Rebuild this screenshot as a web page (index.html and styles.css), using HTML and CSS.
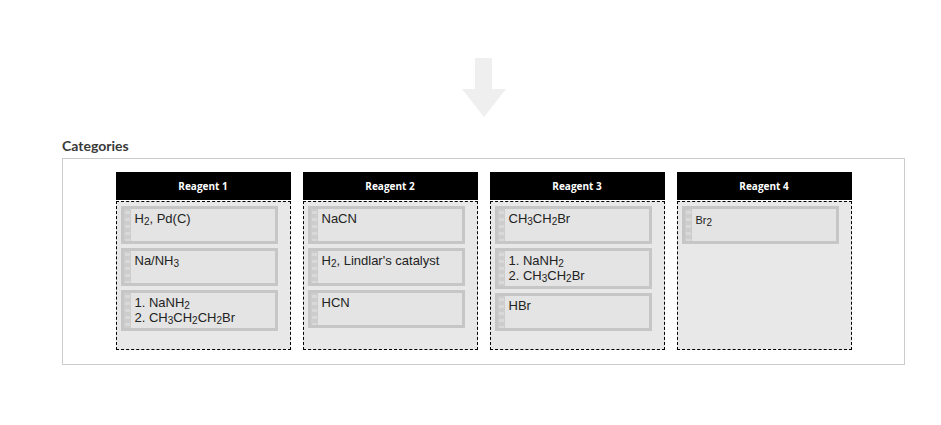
FILE: index.html
```html
<!DOCTYPE html>
<html>
<head>
<meta charset="utf-8">
<link rel="stylesheet" href="styles.css">
</head>
<body>
<div class="page">
  <div class="arrow-wrap">
    <svg class="arrow" width="46" height="60" viewBox="0 0 46 60">
      <polygon points="14,0 31,0 31,31 45,31 23,59 1,31 14,31" fill="#efefef"/>
    </svg>
  </div>
  <h2 class="title">Categories</h2>
  <div class="categories">
    <div class="cols">
      <div class="col">
        <div class="col-head">Reagent 1</div>
        <div class="drop">
          <div class="card"><span class="handle"></span><div class="txt">H<sub>2</sub>, Pd(C)</div></div>
          <div class="card"><span class="handle"></span><div class="txt">Na/NH<sub>3</sub></div></div>
          <div class="card"><span class="handle"></span><div class="txt">1. NaNH<sub>2</sub><br>2. CH<sub>3</sub>CH<sub>2</sub>CH<sub>2</sub>Br</div></div>
        </div>
      </div>
      <div class="col">
        <div class="col-head">Reagent 2</div>
        <div class="drop">
          <div class="card"><span class="handle"></span><div class="txt">NaCN</div></div>
          <div class="card"><span class="handle"></span><div class="txt">H<sub>2</sub>, Lindlar's catalyst</div></div>
          <div class="card"><span class="handle"></span><div class="txt">HCN</div></div>
        </div>
      </div>
      <div class="col">
        <div class="col-head">Reagent 3</div>
        <div class="drop">
          <div class="card"><span class="handle"></span><div class="txt">CH<sub>3</sub>CH<sub>2</sub>Br</div></div>
          <div class="card"><span class="handle"></span><div class="txt">1. NaNH<sub>2</sub><br>2. CH<sub>3</sub>CH<sub>2</sub>Br</div></div>
          <div class="card"><span class="handle"></span><div class="txt">HBr</div></div>
        </div>
      </div>
      <div class="col">
        <div class="col-head">Reagent 4</div>
        <div class="drop">
          <div class="card"><span class="handle"></span><div class="txt small">Br<sub>2</sub></div></div>
        </div>
      </div>
    </div>
  </div>
</div>
</body>
</html>
```
FILE: styles.css
```css
* { box-sizing: border-box; }
html, body { margin: 0; padding: 0; background: #fff; }
.page {
  width: 941px;
  height: 425px;
  padding: 58px 36px 0 62px;
}
.arrow-wrap {
  display: flex;
  justify-content: center;
  width: 843px;
  height: 60px;
}
.arrow { display: block; }
.title {
  margin: 20px 0 0 0;
  font-family: Lato, "Liberation Sans", sans-serif;
  font-weight: 700;
  font-size: 14px;
  line-height: 16px;
  color: #3a3a3a;
  height: 20px;
}
.categories {
  width: 843px;
  height: 207px;
  border: 1px solid #cccccc;
  padding-top: 13px;
  display: flex;
  justify-content: center;
}
.cols {
  display: flex;
  gap: 12px;
}
.col {
  width: 175px;
}
.col-head {
  height: 28px;
  background: #000;
  color: #fff;
  font-family: "Open Sans", "DejaVu Sans", sans-serif;
  font-weight: 700;
  font-size: 10px;
  display: flex;
  align-items: center;
  justify-content: center;
  margin-bottom: 1px;
}
.drop {
  height: 149px;
  border: 1px dashed #000;
  background: #e8e8e8;
  padding: 4px 0 0 4px;
  display: flex;
  flex-direction: column;
  gap: 4px;
}
.card {
  width: 157px;
  border: 3px solid #c6c6c6;
  background: #e4e4e4;
  display: flex;
  min-height: 38px;
}
.handle {
  width: 7px;
  flex: none;
  background-color: #cdcdcd;
  background-image: repeating-linear-gradient(to bottom, transparent 0, transparent 2px, #d9d9d9 2px, #d9d9d9 5px, transparent 5px, transparent 7px);
  background-size: 5px 100%;
  background-repeat: no-repeat;
  background-position: 1px 0;
}
.txt {
  padding: 2px 4px 3px 4px;
  font-family: "Liberation Sans", Arial, sans-serif;
  font-size: 13px;
  line-height: 15px;
  color: #222;
}
.txt.small { font-size: 11px; padding-top: 4px; }
sub {
  font-size: 10px;
  line-height: 0;
  vertical-align: -2px;
}
```
